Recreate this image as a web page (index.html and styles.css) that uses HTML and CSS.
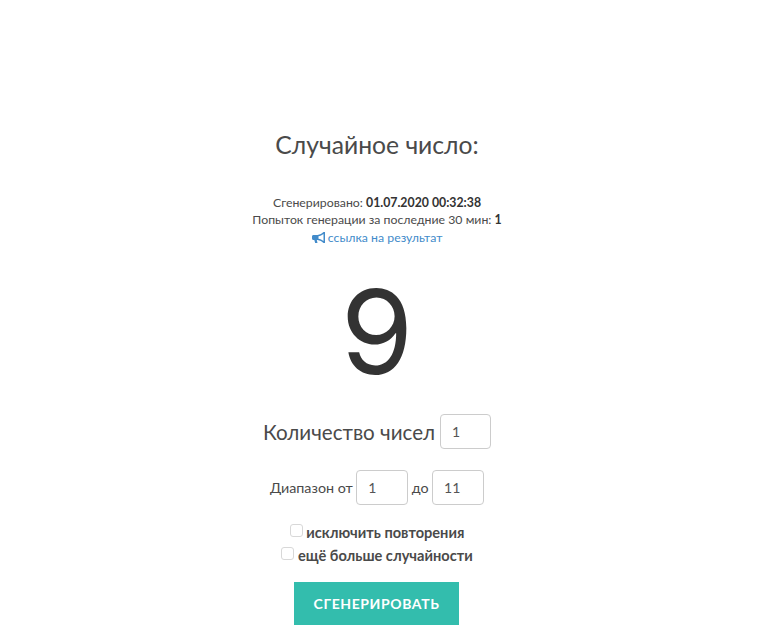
FILE: index.html
```html
<!DOCTYPE html>
<html lang="ru">
  <head>
    <meta charset="utf-8">
    <title>Случайное число</title>
    <link rel="stylesheet" href="styles.css">
  </head>
<body>
  <main class="generator">
    <h1 class="title">Случайное число:</h1>
    <div class="info">
      <div>Сгенерировано: <b>01.07.2020 00:32:38</b></div>
      <div>Попыток генерации за последние 30 мин: <b>1</b></div>
      <div>
        <a class="result-link" href="#">
          <svg class="icon" viewBox="0 0 13 11" width="13" height="11"><path fill="#428bca" fill-rule="evenodd" d="M11.5 0 L13 0 L13 11 L11.5 11 C10 9.5 8 8.3 5.5 8 L4.8 8 L5.5 11 L3.2 11 L2.3 8 L1.5 8 C.6 8 0 7.3 0 6.5 L0 4.5 C0 3.7 .6 3 1.5 3 L5.5 3 C8 2.7 10 1.5 11.5 0 Z M11.5 2 C10 3.2 8.2 4 6.5 4.3 L6.5 6.7 C8.2 7 10 7.8 11.5 9 Z"/></svg>
          ссылка на результат
        </a>
      </div>
    </div>
    <div class="number">9</div>
    <div class="row row-count">
      <label>Количество чисел</label>
      <input class="field" type="text" value="1">
    </div>
    <div class="row row-range">
      <label>Диапазон от</label>
      <input class="field" type="text" value="1">
      <label>до</label>
      <input class="field" type="text" value="11">
    </div>
    <div class="checks">
      <label class="check check-first"><span class="box"></span> исключить повторения</label>
      <label class="check"><span class="box"></span> ещё больше случайности</label>
    </div>
    <button class="submit" type="button">Сгенерировать</button>
  </main>
</body>
</html>
```

FILE: styles.css
```css
html {
  background: white;
}
body {
  margin: 0;
  height: 634px;
  overflow: hidden;
  font-family: Lato, "Open Sans", "Liberation Sans", sans-serif;
  color: #4a4a4a;
}
.generator {
  width: 754px;
  padding-top: 128px;
  display: flex;
  flex-direction: column;
  align-items: center;
  text-align: center;
}
.title {
  margin: 0;
  font-size: 24.7px;
  font-weight: 400;
  line-height: 34px;
}
.info {
  margin-top: 32px;
  font-size: 12.3px;
  line-height: 17.4px;
}
.info b {
  color: #333;
}
.result-link {
  color: #428bca;
  text-decoration: none;
}
.icon {
  vertical-align: -1px;
}
.number {
  margin-top: 6px;
  font-family: Inter, Lato, sans-serif;
  font-size: 117px;
  line-height: 160px;
  color: #333;
}
.row {
  display: flex;
  align-items: center;
  justify-content: center;
}
.row-count {
  margin-top: 2px;
  gap: 5px;
  font-size: 20.6px;
}
.row-range {
  margin-top: 21px;
  gap: 3.5px;
  font-size: 14.3px;
}
.row-count .field {
  width: 51px;
}
.row-range .field {
  width: 52px;
}
.field {
  box-sizing: border-box;
  height: 35px;
  padding: 0 12px 0 11px;
  border: 1px solid #ccc;
  border-radius: 4px;
  background: white;
  font: inherit;
  font-size: 14px;
  color: #555;
}
.checks {
  margin-top: 16px;
  font-size: 14.6px;
  font-weight: 700;
  line-height: 23px;
}
.check {
  display: block;
}
.box {
  display: inline-block;
  box-sizing: border-box;
  width: 13px;
  height: 13px;
  border: 1px solid #d8d8d8;
  border-radius: 3px;
  background: white;
  vertical-align: 1px;
}
.submit {
  margin-top: 15px;
  margin-right: 1px;
  width: 165px;
  height: 43px;
  padding: 0;
  border: 0;
  background: #33bdad;
  color: white;
  font: inherit;
  font-size: 14px;
  font-weight: 700;
  letter-spacing: 0.6px;
  text-transform: uppercase;
}
```
